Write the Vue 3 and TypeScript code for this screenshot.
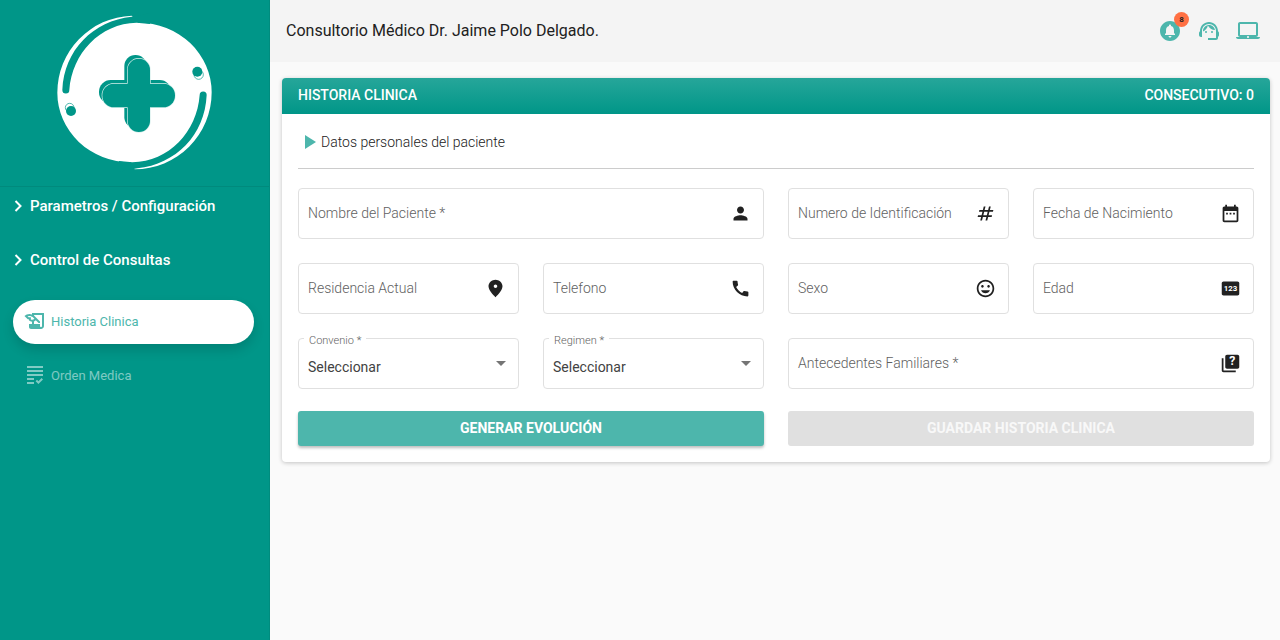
<script setup lang="ts">
import { reactive } from 'vue'

type IconName = 'person' | 'tag' | 'calendar' | 'place' | 'phone' | 'smile' | 'digits' | 'quiz'

interface Field {
  id: string
  label: string
  icon?: IconName
  wide?: boolean
  select?: boolean
}

const fields: Field[] = [
  { id: 'nombre', label: 'Nombre del Paciente *', icon: 'person', wide: true },
  { id: 'identificacion', label: 'Numero de Identificación', icon: 'tag' },
  { id: 'nacimiento', label: 'Fecha de Nacimiento', icon: 'calendar' },
  { id: 'residencia', label: 'Residencia Actual', icon: 'place' },
  { id: 'telefono', label: 'Telefono', icon: 'phone' },
  { id: 'sexo', label: 'Sexo', icon: 'smile' },
  { id: 'edad', label: 'Edad', icon: 'digits' },
  { id: 'convenio', label: 'Convenio *', select: true },
  { id: 'regimen', label: 'Regimen *', select: true },
  { id: 'antecedentes', label: 'Antecedentes Familiares *', icon: 'quiz', wide: true },
]

const icons: Record<IconName, string> = {
  person: 'M12 12c2.21 0 4-1.79 4-4s-1.79-4-4-4-4 1.79-4 4 1.79 4 4 4zm0 2c-2.67 0-8 1.34-8 4v2h16v-2c0-2.66-5.33-4-8-4z',
  tag: 'M20.5 10L21 8h-4l1-4h-2l-1 4h-4l1-4h-2L9 8H5l-.5 2h4l-1 4h-4L3 16h4l-1 4h2l1-4h4l-1 4h2l1-4h4l.5-2h-4l1-4h4zm-7 4h-4l1-4h4l-1 4z',
  calendar: 'M9 11H7v2h2v-2zm4 0h-2v2h2v-2zm4 0h-2v2h2v-2zm2-7h-1V2h-2v2H8V2H6v2H5c-1.11 0-1.99.9-1.99 2L3 20c0 1.1.89 2 2 2h14c1.1 0 2-.9 2-2V6c0-1.1-.9-2-2-2zm0 16H5V9h14v11z',
  place: 'M12 2C8.13 2 4 5.13 4 9.5c0 5.25 8 12.5 8 12.5s8-7.25 8-12.5C20 5.13 15.87 2 12 2zm0 9.5c-1.1 0-2-.9-2-2s.9-2 2-2 2 .9 2 2-.9 2-2 2z',
  phone: 'M20.01 15.38c-1.23 0-2.42-.2-3.53-.56-.35-.12-.74-.03-1.01.24l-1.57 1.97c-2.83-1.35-5.48-3.9-6.89-6.83l1.95-1.66c.27-.28.35-.67.24-1.02-.37-1.11-.56-2.3-.56-3.53 0-.54-.45-.99-.99-.99H4.19C3.65 3 3 3.24 3 3.99 3 13.28 10.73 21 20.01 21c.71 0 .99-.63.99-1.18v-3.45c0-.54-.45-.99-.99-.99z',
  smile: 'M11.99 2C6.47 2 2 6.48 2 12s4.47 10 9.99 10C17.52 22 22 17.52 22 12S17.52 2 11.99 2zM12 20c-4.42 0-8-3.58-8-8s3.58-8 8-8 8 3.58 8 8-3.58 8-8 8zm3.5-9c.83 0 1.5-.67 1.5-1.5S16.33 8 15.5 8 14 8.67 14 9.5s.67 1.5 1.5 1.5zm-7 0c.83 0 1.5-.67 1.5-1.5S9.33 8 8.5 8 7 8.67 7 9.5 7.67 11 8.5 11zm3.5 6.5c2.33 0 4.31-1.46 5.11-3.5H6.89c.8 2.04 2.78 3.5 5.11 3.5z',
  digits: 'M20 4H4c-1.11 0-2 .9-2 2v12c0 1.1.89 2 2 2h16c1.1 0 2-.9 2-2V6c0-1.1-.9-2-2-2z',
  quiz: 'M4 6H2v14c0 1.1.9 2 2 2h14v-2H4V6zm16-4H8c-1.1 0-2 .9-2 2v12c0 1.1.9 2 2 2h12c1.1 0 2-.9 2-2V4c0-1.1-.9-2-2-2z',
}

const values = reactive<Record<string, string>>(
  Object.fromEntries(fields.map((f) => [f.id, ''])),
)
</script>

<template>
  <div class="shell">
    <aside class="sidebar">
      <div class="brand">
        <svg class="logo" viewBox="0 0 570 555" role="img" aria-label="Logo">
          <path class="w" d="M295 68A220 209 0 0 1 515 277A232 231 0 0 1 284 508L272 487A220 209 0 0 1 52 278A232 231 0 0 1 275 47Z" />
          <path class="g" d="M67 270C72 150 160 62 275 50L330 40L330 72L290 68C180 70 96 160 88 270A10 10 0 0 1 67 270Z" />
          <path class="g" d="M500 285C495 405 407 493 292 505L237 515L237 483L277 487C387 485 471 395 479 285A10 10 0 0 1 500 285Z" />
          <rect class="g" x="253" y="165" width="67" height="220" rx="33" />
          <rect class="g" x="177" y="240" width="217" height="72" rx="35" />
          <g class="outline">
            <rect x="263" y="176" width="67" height="220" rx="33" />
            <rect x="187" y="251" width="218" height="71" rx="35" />
          </g>
          <rect class="g" x="263" y="176" width="67" height="220" rx="33" />
          <rect class="g" x="187" y="251" width="218" height="71" rx="35" />
          <circle class="ring" cx="476" cy="224" r="14" />
          <circle class="g" cx="472" cy="215" r="15" />
          <circle class="ring" cx="89" cy="323" r="13" />
          <circle class="g" cx="93" cy="333" r="15" />
        </svg>
      </div>
      <nav class="menu">
        <button class="group" type="button">
          <svg viewBox="0 0 9 12"><path d="M1.5 1L6.5 6l-5 5" /></svg>
          Parametros / Configuración
        </button>
        <button class="group" type="button">
          <svg viewBox="0 0 9 12"><path d="M1.5 1L6.5 6l-5 5" /></svg>
          Control de Consultas
        </button>
        <a class="item active" href="#historia">
          <svg viewBox="0 0 24 24"><path d="M9 4v1.38c-.83-.33-1.72-.5-2.61-.5-1.79 0-3.58.68-4.95 2.05l3.33 3.33h1.11v1.11c.86.86 1.98 1.31 3.11 1.36V15H6v3c0 1.1.9 2 2 2h10c1.66 0 3-1.34 3-3V4H9zm-1.11 6.41V8.26H5.61L4.57 7.22a5.07 5.07 0 0 1 1.82-.34c1.34 0 2.59.52 3.54 1.46l1.41 1.41-.2.2c-.51.51-1.19.8-1.92.8-.47 0-.93-.12-1.33-.34zM19 17c0 .55-.45 1-1 1s-1-.45-1-1v-2h-6v-2.59c.57-.23 1.1-.57 1.56-1.03l.2-.2L15.59 14H17v-1.41l-6-5.97V6h8v11z" /></svg>
          Historia Clinica
        </a>
        <a class="item" href="#orden">
          <svg viewBox="0 0 24 24"><path d="M4 7h16v2H4V7zm0 6h16v-2H4v2zm0 4h7v-2H4v2zm0 4h7v-2H4v2zm11.41-2.83L14 16.75l-1.41 1.41L15.41 21 20 16.42 18.58 15l-3.17 3.17zM4 3v2h16V3H4z" /></svg>
          Orden Medica
        </a>
      </nav>
    </aside>

    <div class="page">
      <header class="topbar">
        <h1>Consultorio Médico Dr. Jaime Polo Delgado.</h1>
        <div class="actions">
          <button type="button" aria-label="Notificaciones">
            <svg viewBox="0 0 24 24"><path d="M12 2C6.48 2 2 6.48 2 12s4.48 10 10 10 10-4.48 10-10S17.52 2 12 2zm0 16.5c-.83 0-1.5-.67-1.5-1.5h3c0 .83-.67 1.5-1.5 1.5zm5-2.5H7v-1l1-1v-2.61C8 9.27 9.03 7.47 11 7v-.5c0-.57.43-1 1-1s1 .43 1 1V7c1.97.47 3 2.28 3 4.39V14l1 1v1z" /></svg>
            <span class="badge">8</span>
          </button>
          <button type="button" aria-label="Soporte">
            <svg viewBox="0 0 24 24">
              <path d="M21 12.22C21 6.73 16.74 3 12 3c-4.69 0-9 3.65-9 9.28-.6.34-1 .98-1 1.72v2c0 1.1.9 2 2 2h1v-6.1c0-3.87 3.13-7 7-7s7 3.13 7 7V19h-8v2h8c1.1 0 2-.9 2-2v-1.22c.59-.31 1-.92 1-1.64v-2.3c0-.7-.41-1.31-1-1.62z" />
              <circle cx="9" cy="13" r="1" /><circle cx="15" cy="13" r="1" />
              <path d="M18 11.03C17.52 8.18 15.04 6 12.05 6c-3.03 0-6.29 2.51-6.03 6.45 2.47-1.01 4.33-3.21 4.86-5.89 1.31 2.63 4 4.44 7.12 4.47z" />
            </svg>
          </button>
          <button type="button" aria-label="Equipo">
            <svg viewBox="0 0 24 24"><path d="M20 18c1.1 0 1.99-.9 1.99-2L22 5c0-1.1-.9-2-2-2H4c-1.1 0-2 .9-2 2v11c0 1.1.9 2 2 2H0c0 1.1.9 2 2 2h20c1.1 0 2-.9 2-2h-4zM4 5h16v11H4V5zm8 14c-.55 0-1-.45-1-1s.45-1 1-1 1 .45 1 1-.45 1-1 1z" /></svg>
          </button>
        </div>
      </header>

      <main>
        <section class="card">
          <div class="card-head">
            <h2>HISTORIA CLINICA</h2>
            <span>CONSECUTIVO: 0</span>
          </div>
          <form class="card-body" @submit.prevent>
            <h3>
              <svg viewBox="0 0 12 14"><path d="M0 0l11 7-11 7z" /></svg>
              Datos personales del paciente
            </h3>
            <div class="grid">
              <div
                v-for="f in fields"
                :key="f.id"
                class="field"
                :class="{ wide: f.wide, floating: f.select || values[f.id] }"
              >
                <label :for="f.id">{{ f.label }}</label>
                <select v-if="f.select" :id="f.id" v-model="values[f.id]">
                  <option value="">Seleccionar</option>
                </select>
                <input v-else :id="f.id" v-model="values[f.id]" type="text" />
                <svg v-if="f.select" class="caret" viewBox="0 0 10 5"><path d="M0 0h10L5 5z" /></svg>
                <svg v-if="f.icon" class="icon" viewBox="0 0 24 24">
                  <path :d="icons[f.icon]" />
                  <text v-if="f.icon === 'digits'" x="12" y="15" font-size="9">123</text>
                  <text v-if="f.icon === 'quiz'" x="14" y="14" font-size="14">?</text>
                </svg>
              </div>
            </div>
            <div class="buttons">
              <button class="primary" type="submit">GENERAR EVOLUCIÓN</button>
              <button type="button" disabled>GUARDAR HISTORIA CLINICA</button>
            </div>
          </form>
        </section>
      </main>
    </div>
  </div>
</template>

<style>
body {
  margin: 0;
  background: #fafafa;
}
</style>

<style scoped>
.shell {
  display: flex;
  min-height: 100vh;
  font-family: Roboto, sans-serif;
  font-size: 14px;
  color: #212121;
}
.shell * {
  box-sizing: border-box;
}
button,
input,
select {
  font: inherit;
  border: 0;
  margin: 0;
  padding: 0;
  background: none;
}
svg {
  display: block;
  flex: none;
  fill: currentColor;
}
h1,
h2,
h3 {
  margin: 0;
  font-weight: 400;
}

.sidebar {
  flex: 0 0 270px;
  background: #009688;
  border-right: 1px solid #008c7e;
}
.brand {
  height: 187px;
  padding-left: 40px;
  border-bottom: 1px solid #008a7d;
}
.logo {
  width: 190px;
  height: 185px;
}
.logo .w {
  fill: #fff;
}
.logo .g {
  fill: #009688;
}
.logo .outline {
  fill: none;
  stroke: #d8f0ed;
  stroke-width: 4;
}
.logo .ring {
  fill: none;
  stroke: #009688;
  stroke-width: 2;
}
.menu {
  display: flex;
  flex-direction: column;
  padding: 0 15px 0 13px;
}
.group {
  display: flex;
  align-items: center;
  gap: 7px;
  height: 38px;
  margin-bottom: 16px;
  padding-left: 1px;
  font-size: 15px;
  font-weight: 500;
  color: #fff;
  cursor: pointer;
}
.group svg {
  width: 9px;
  height: 12px;
  fill: none;
  stroke: #fff;
  stroke-width: 2;
}
.item {
  display: flex;
  align-items: center;
  gap: 4px;
  height: 44px;
  margin: 5px 0;
  padding: 0 10px 2px;
  border-radius: 22px;
  font-size: 13px;
  color: rgba(255, 255, 255, 0.5);
  text-decoration: none;
}
.item svg {
  width: 24px;
  height: 24px;
}
.item.active {
  background: #fff;
  color: #4db6ac;
  box-shadow: 0 6px 12px rgba(0, 0, 0, 0.14);
}

.page {
  flex: 1;
  min-width: 0;
}
.topbar {
  display: flex;
  align-items: center;
  justify-content: space-between;
  height: 62px;
  padding: 0 20px 0 16px;
  background: #f4f4f4;
}
.topbar h1 {
  padding-bottom: 2px;
  font-size: 16px;
}
.actions {
  display: flex;
  gap: 15px;
}
.actions button {
  position: relative;
  color: #4db6ac;
  cursor: pointer;
}
.actions svg {
  width: 24px;
  height: 24px;
}
.badge {
  position: absolute;
  top: -7px;
  right: -7px;
  width: 15px;
  height: 15px;
  border-radius: 50%;
  background: #ff7043;
  color: #212121;
  font-size: 8px;
  font-weight: 700;
  line-height: 15px;
  text-align: center;
}

main {
  padding: 16px 10px 0 12px;
}
.card {
  border-radius: 4px;
  background: #fff;
  box-shadow: 0 1px 4px rgba(0, 0, 0, 0.22);
}
.card-head {
  display: flex;
  align-items: center;
  justify-content: space-between;
  height: 36px;
  padding: 0 16px 2px;
  border-radius: 4px 4px 0 0;
  background: linear-gradient(#26a69a, #009688);
  color: #fff;
}
.card-head h2 {
  font-size: 14px;
}
.card-head h2,
.card-head span {
  font-weight: 500;
}
.card-body {
  padding: 0 16px 16px;
}
h3 {
  display: flex;
  align-items: center;
  gap: 4px;
  height: 55px;
  padding-top: 1px;
  padding-left: 7px;
  border-bottom: 1px solid #ccc;
  font-size: 14px;
  font-weight: 300;
}
h3 svg {
  width: 12px;
  height: 14px;
  color: #4db6ac;
}
.grid {
  display: grid;
  grid-template-columns: repeat(4, minmax(0, 1fr));
  gap: 24px;
  padding: 19px 0 22px;
}
.field {
  position: relative;
  display: grid;
  align-items: center;
  height: 51px;
  border: 1px solid #e0e0e0;
  border-radius: 4px;
}
.field > * {
  grid-area: 1 / 1;
}
.wide {
  grid-column: span 2;
}
.field label {
  padding: 0 0 2px 9px;
  color: #616161;
  font-weight: 300;
  pointer-events: none;
}
.field.floating label {
  position: absolute;
  top: -5px;
  left: 5px;
  padding: 0 5px;
  background: #fff;
  font-size: 11px;
  line-height: 13px;
}
.field input,
.field select {
  width: 100%;
  height: 49px;
  padding: 0 40px 0 9px;
  color: #424242;
  outline: 0;
}
.field select {
  appearance: none;
  padding-top: 7px;
}
.caret {
  width: 10px;
  height: 5px;
  margin-right: 12px;
  justify-self: end;
  color: #757575;
  pointer-events: none;
}
.icon {
  width: 21px;
  height: 21px;
  margin-right: 12px;
  justify-self: end;
}
.icon text {
  fill: #fff;
  font-weight: 700;
  text-anchor: middle;
}
.buttons {
  display: grid;
  grid-template-columns: repeat(2, minmax(0, 1fr));
  gap: 24px;
}
.buttons button {
  height: 35px;
  padding-bottom: 2px;
  border-radius: 3px;
  background: #e0e0e0;
  color: #f8f8f8;
  font-weight: 700;
}
.buttons .primary {
  background: #4db6ac;
  color: #fff;
  box-shadow: 0 2px 3px rgba(0, 0, 0, 0.26);
  cursor: pointer;
}
</style>
